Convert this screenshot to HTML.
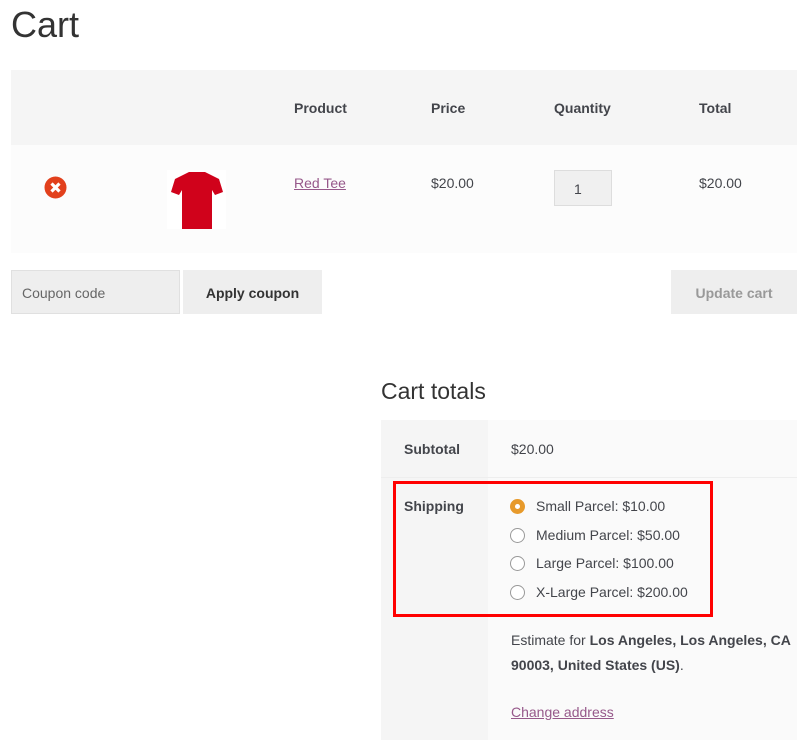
<!DOCTYPE html>
<html><head><style>
*{margin:0;padding:0;box-sizing:border-box}
body{width:812px;height:740px;overflow:hidden;background:#fff;font-family:"Liberation Sans",sans-serif;color:#43454b;font-size:14px;position:relative}
.a{position:absolute}
b{font-weight:bold}
a{color:#96588a;text-decoration:underline}
.radio{position:absolute;width:15px;height:15px;border:1px solid #999;border-radius:50%;background:#fff}
</style></head><body>
<div class="a" style="left:11px;top:4px;font-size:36px;color:#333">Cart</div>
<div class="a" style="left:11px;top:70px;width:786px;height:75px;background:#f5f5f5"></div>
<div class="a" style="left:11px;top:145px;width:786px;height:108px;background:#fcfcfc"></div>
<div class="a" style="left:294px;top:100px;font-weight:bold">Product</div>
<div class="a" style="left:431px;top:100px;font-weight:bold">Price</div>
<div class="a" style="left:554px;top:100px;font-weight:bold">Quantity</div>
<div class="a" style="left:699px;top:100px;font-weight:bold">Total</div>
<svg class="a" style="left:44px;top:176px" width="23" height="23" viewBox="0 0 23 23"><circle cx="11.5" cy="11.5" r="11" fill="#e2401c"/><path d="M7.5 7.5l8 8M15.5 7.5l-8 8" stroke="#fff" stroke-width="3.2"/></svg>
<div class="a" style="left:167px;top:170px;width:59px;height:59px;background:#fff"></div>
<svg class="a" style="left:170px;top:170px" width="54" height="60" viewBox="0 0 54 60"><path d="M19 2h16l14 7 4 13-8 3-3-5v39H12V20l-3 5-8-3 4-13z" fill="#d0021b"/></svg>
<a class="a" style="left:294px;top:175px">Red Tee</a>
<div class="a" style="left:431px;top:175px">$20.00</div>
<div class="a" style="left:554px;top:170px;width:58px;height:36px;background:#f0f0f0;border:1px solid #ddd;padding:10px 0 0 19px">1</div>
<div class="a" style="left:699px;top:175px">$20.00</div>
<div class="a" style="left:11px;top:270px;width:169px;height:44px;background:#eee;border:1px solid #e0e0e0;padding:14px 10px;color:#666">Coupon code</div>
<div class="a" style="left:183px;top:270px;width:139px;height:44px;background:#eee;text-align:center;padding-top:15px;font-weight:bold;color:#333">Apply coupon</div>
<div class="a" style="left:671px;top:270px;width:126px;height:44px;background:#eee;text-align:center;padding-top:15px;font-weight:bold;color:#999">Update cart</div>
<div class="a" style="left:381px;top:378px;font-size:23px;color:#333">Cart totals</div>
<div class="a" style="left:381px;top:420px;width:107px;height:320px;background:#f5f5f5"></div>
<div class="a" style="left:488px;top:420px;width:309px;height:320px;background:#fafafa"></div>
<div class="a" style="left:381px;top:477px;width:416px;height:1px;background:#eee"></div>
<div class="a" style="left:404px;top:441px;font-weight:bold">Subtotal</div>
<div class="a" style="left:511px;top:441px">$20.00</div>
<div class="a" style="left:404px;top:498px;font-weight:bold">Shipping</div>
<div class="a" style="left:510px;top:499px;width:15px;height:15px;border-radius:50%;background:#e79a2b"><div style="margin:5px;width:5px;height:5px;border-radius:50%;background:#fff"></div></div>
<div class="radio" style="left:510px;top:528px"></div>
<div class="radio" style="left:510px;top:556px"></div>
<div class="radio" style="left:510px;top:585px"></div>
<div class="a" style="left:536px;top:498px">Small Parcel: $10.00</div>
<div class="a" style="left:536px;top:527px">Medium Parcel: $50.00</div>
<div class="a" style="left:536px;top:555px">Large Parcel: $100.00</div>
<div class="a" style="left:536px;top:584px">X-Large Parcel: $200.00</div>
<div class="a" style="left:393px;top:481px;width:320px;height:136px;border:3px solid #f00"></div>
<div class="a" style="left:511px;top:628px;width:280px;line-height:25px">Estimate for <b>Los Angeles, Los Angeles, CA 90003, United States (US)</b>.</div>
<a class="a" style="left:511px;top:704px">Change address</a>
</body></html>
